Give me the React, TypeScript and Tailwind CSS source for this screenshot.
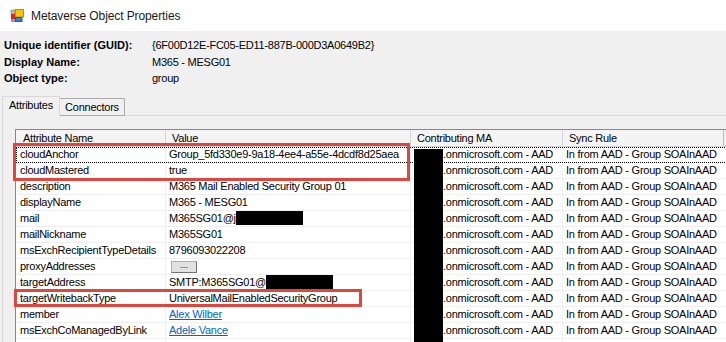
import { ReactNode } from "react";

type Row = {
  name: string;
  value: ReactNode;
  focus?: boolean;
  empty?: boolean;
};

const Redact = ({ w }: { w: string }) => (
  <span className={`inline-block ${w} h-[14px] bg-black align-[-3px]`}></span>
);

const Link = ({ text }: { text: string }) => (
  <span className="text-[#0066cc] underline">{text}</span>
);

const rows: Row[] = [
  { name: "cloudAnchor", value: "Group_5fd330e9-9a18-4ee4-a55e-4dcdf8d25aea", focus: true },
  { name: "cloudMastered", value: "true" },
  { name: "description", value: "M365 Mail Enabled Security Group 01" },
  { name: "displayName", value: "M365 - MESG01" },
  {
    name: "mail",
    value: (
      <>
        {"M365SG01@j"}
        <Redact w="w-[67px]" />
      </>
    ),
  },
  { name: "mailNickname", value: "M365SG01" },
  { name: "msExchRecipientTypeDetails", value: "8796093022208" },
  {
    name: "proxyAddresses",
    value: (
      <span className="ml-[2px] mt-[-1px] inline-flex w-[26px] h-[12px] items-start justify-center bg-[#e1e1e1] border border-[#adadad] border-r-[#707070] border-b-[#707070] text-[9px] leading-[7px] tracking-normal align-middle">
        {"..."}
      </span>
    ),
  },
  {
    name: "targetAddress",
    value: (
      <>
        {"SMTP:M365SG01@"}
        <Redact w="w-[67px]" />
      </>
    ),
  },
  { name: "targetWritebackType", value: "UniversalMailEnabledSecurityGroup" },
  { name: "member", value: <Link text="Alex Wilber" /> },
  { name: "msExchCoManagedByLink", value: <Link text="Adele Vance" /> },
  { name: "", value: "", empty: true },
];

const AppIcon = () => (
  <svg width="14" height="14" viewBox="0 0 14 14">
    <rect x="1" y="1" width="4" height="4" fill="#b8b8b8" stroke="#7a7a7a" strokeWidth="0.6" />
    <rect x="1" y="5" width="4" height="5" fill="#d8262a" />
    <rect x="1" y="10" width="4" height="3" fill="#9a9a9a" />
    <rect x="5.5" y="0.5" width="8" height="7.5" fill="#f8c400" stroke="#c98a00" />
    <rect x="5.5" y="8.5" width="6.5" height="4" fill="#3d7fd8" stroke="#2558a8" />
  </svg>
);

const InfoLine = ({ label, value }: { label: string; value: string }) => (
  <div className="flex h-[16.5px] leading-[16.5px]">
    <div className="w-[148px] font-bold tracking-normal">{label}</div>
    <div>{value}</div>
  </div>
);

const App = () => {
  return (
    <div className="w-[726px] h-[342px] overflow-hidden bg-[#f0f0f0] text-black text-[11px] tracking-[-0.25px] font-['Liberation_Sans',Arial,sans-serif]">
      {/* title bar */}
      <div className="flex items-center h-[31px] bg-white pl-[10px] gap-[7px]">
        <AppIcon />
        <div className="text-[12px] tracking-[-0.1px] text-[#1a1a1a]">
          {"Metaverse Object Properties"}
        </div>
      </div>

      {/* object info */}
      <div className="h-[65px] pt-[6px] pl-[4px]">
        <InfoLine
          label="Unique identifier (GUID):"
          value="{6F00D12E-FC05-ED11-887B-000D3A0649B2}"
        />
        <InfoLine label="Display Name:" value="M365 - MESG01" />
        <InfoLine label="Object type:" value="group" />
      </div>

      {/* tabs */}
      <div className="flex items-end h-[20px] pl-[2px]">
        <div className="flex items-center justify-center w-[58px] h-[20px] pb-[2px] border-l border-t border-r border-[#d9d9d9] bg-[#f0f0f0]">
          {"Attributes"}
        </div>
        <div className="flex items-center justify-center w-[65px] h-[18px] border border-l-0 border-[#acacac] bg-[#f0f0f0]">
          {"Connectors"}
        </div>
        <div className="flex-1 border-b border-[#d9d9d9]"></div>
      </div>

      {/* tab page */}
      <div className="ml-[2px] h-[300px] border-l border-[#d9d9d9] pl-[12px] pt-[13px]">
        <div className="relative w-[720px] h-[300px] bg-white border-l border-t border-[#828790]">
          {/* header */}
          <div className="flex h-[17px] leading-[16px] bg-[#f4f4f4] border-b border-[#d5d5d5]">
            <div className="w-[150px] shrink-0 pl-[7px] border-r border-[#d5d5d5]">
              {"Attribute Name"}
            </div>
            <div className="w-[245px] shrink-0 pl-[6px] border-r border-[#d5d5d5]">
              {"Value"}
            </div>
            <div className="w-[152px] shrink-0 pl-[6px] border-r border-[#d5d5d5]">
              {"Contributing MA"}
            </div>
            <div className="w-[161px] shrink-0 pl-[6px] border-r border-[#bdbdbd]">
              {"Sync Rule"}
            </div>
            <div className="flex-1 bg-[#f0f0f0]"></div>
          </div>

          {/* rows */}
          {rows.map((row, i) => (
            <div
              key={i}
              className={`flex h-[16px] leading-[15px] whitespace-nowrap border-b border-[#f0f0f0] ${
                row.focus ? "outline outline-1 outline-dotted outline-offset-[-1px] outline-black" : ""
              }`}
            >
              <div className="w-[150px] shrink-0 pl-[4px] border-r border-[#f0f0f0] overflow-hidden">
                {row.name}
              </div>
              <div className="w-[245px] shrink-0 pl-[3px] border-r border-[#f0f0f0] overflow-hidden">
                {row.value}
              </div>
              <div className="w-[152px] shrink-0 pl-[32px] border-r border-[#f0f0f0] overflow-hidden">
                {row.empty ? "" : ".onmicrosoft.com - AAD"}
              </div>
              <div className="w-[161px] shrink-0 pl-[3px] overflow-hidden">
                {row.empty ? "" : "In from AAD - Group SOAInAAD"}
              </div>
            </div>
          ))}

          {/* redaction strip over the tenant names */}
          <div className="absolute left-[398px] top-[19px] w-[29px] bottom-0 bg-black"></div>

          {/* highlight boxes */}
          <div className="absolute left-[-3px] top-[13px] w-[397px] h-[38px] border-[3px] border-[#e0463c]"></div>
          <div className="absolute left-[-2px] top-[159px] w-[348px] h-[18px] border-[3px] border-[#e0463c]"></div>
        </div>
      </div>
    </div>
  );
};

export default App;
